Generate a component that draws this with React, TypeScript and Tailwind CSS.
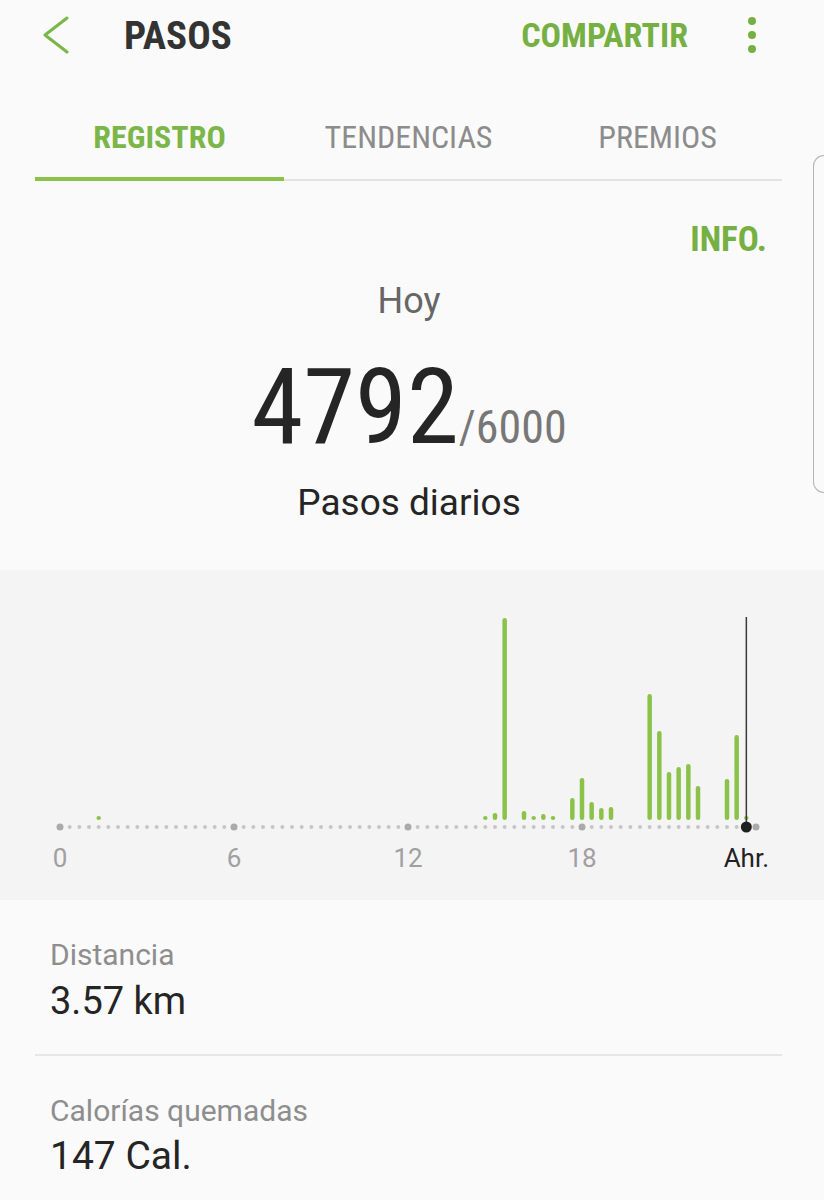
import React from 'react'

const font = "font-['Roboto_Condensed','Roboto',sans-serif]"
const body = "font-['Roboto',sans-serif]"

// bar tops (absolute page y) keyed by 20-minute slot index
const bars: [number, number][] = [
  [4, 816], [44, 816], [45, 813], [46, 618], [48, 811], [49, 816], [50, 814], [51, 816],
  [53, 798], [54, 778], [55, 802], [56, 808], [57, 807],
  [61, 694], [62, 731], [63, 772], [64, 767], [65, 764], [66, 786],
  [69, 779], [70, 735], [71, 816],
]

const slotX = (i: number) => 60 + i * (174 / 18)

const StepsChart = () => {
  const axisY = 257
  const barBottom = 250
  return (
    <svg width="824" height="330" viewBox="0 0 824 330" className="block">
      {bars.map(([i, top]) => {
        const y = top - 570
        const h = Math.max(barBottom - y, 4)
        return (
          <rect key={i} x={slotX(i) - 2.25} y={barBottom - h} width="4.5" height={h} rx="2.25" fill="#8bc34a" />
        )
      })}
      <line x1={slotX(71)} y1="47" x2={slotX(71)} y2={axisY} stroke="#3a3a3a" strokeWidth="1.5" />
      {Array.from({ length: 73 }, (_, i) => {
        const big = i % 18 === 0
        if (i === 71) return <circle key={i} cx={slotX(i)} cy={axisY} r="5.5" fill="#1f1f1f" />
        return <circle key={i} cx={slotX(i)} cy={axisY} r={big ? 3.5 : 2} fill={big ? '#aaaaaa' : '#c6c6c6'} />
      })}
      {[['0', 0], ['6', 18], ['12', 36], ['18', 54]].map(([label, i]) => (
        <text key={label} x={slotX(i as number)} y="297" textAnchor="middle" fontSize="26" fill="#a0a0a0" fontFamily="Roboto, sans-serif">
          {label}
        </text>
      ))}
      <text x={slotX(71)} y="297" textAnchor="middle" fontSize="26" fill="#222222" fontFamily="Roboto, sans-serif">
        Ahr.
      </text>
    </svg>
  )
}

export default function App() {
  return (
    <div className={`${font} relative w-[824px] h-[1200px] overflow-hidden bg-[#fafafa]`}>
      {/* Header */}
      <div className="flex items-start h-[72px]">
        <svg width="26" height="38" viewBox="0 0 26 38" className="mt-[16px] ml-[43px]">
          <polyline points="24,2 2,19 24,36" fill="none" stroke="#7ab648" strokeWidth="3" strokeLinecap="round" strokeLinejoin="round" />
        </svg>
        <div className="ml-[55px] mt-[17px] text-[39px] leading-none font-bold text-[#333333]">PASOS</div>
        <div className="flex-1" />
        <div className="mt-[18px] text-[34px] leading-none font-bold text-[#76b043]">COMPARTIR</div>
        <svg width="10" height="40" viewBox="0 0 10 40" className="mt-[15px] ml-[59px] mr-[67px]">
          <circle cx="5" cy="6" r="4" fill="#76b043" />
          <circle cx="5" cy="20" r="4" fill="#76b043" />
          <circle cx="5" cy="34" r="4" fill="#76b043" />
        </svg>
      </div>

      {/* Tabs */}
      <div className="ml-[35px] mr-[42px]">
        <div className="grid grid-cols-3 h-[105px]">
          <div className="pt-[49px] text-center text-[32px] leading-none font-bold text-[#7ab648]">REGISTRO</div>
          <div className="pt-[49px] text-center text-[32px] leading-none text-[#8c8c8c]">TENDENCIAS</div>
          <div className="pt-[49px] text-center text-[32px] leading-none text-[#8c8c8c]">PREMIOS</div>
        </div>
        <div className="flex items-end h-[4px]">
          <div className="w-[249px] h-[4px] bg-[#8bc34a]" />
          <div className="flex-1 h-[2px] bg-[#e3e3e3]" />
        </div>
      </div>

      {/* Summary */}
      <div className="flex justify-end pr-[57px] mt-[41px]">
        <div className="text-[35px] leading-none font-bold text-[#76b043]">INFO.</div>
      </div>
      <div className={`${body} mt-[26px] pr-[6px] text-center text-[36px] leading-none text-[#666666]`}>Hoy</div>
      <div className="mt-[36px] flex justify-center items-baseline pr-[6px]">
        <span className="text-[105px] leading-none text-[#252525]">4792</span>
        <span className="text-[46px] leading-none text-[#777777]">/6000</span>
      </div>
      <div className={`${body} mt-[24px] pr-[6px] text-center text-[37px] leading-none text-[#252525]`}>Pasos diarios</div>

      {/* Chart */}
      <div className="mt-[49px] h-[330px] bg-[#f4f4f4]">
        <StepsChart />
      </div>

      {/* Details */}
      <div className={`${body} px-[50px] pt-[40px]`}>
        <div className="text-[30px] leading-none text-[#8e8e8e]">Distancia</div>
        <div className="mt-[12px] text-[38px] leading-none text-[#252525]">3.57 km</div>
      </div>
      <div className="ml-[35px] mr-[42px] mt-[34px] h-[2px] bg-[#e6e6e6]" />
      <div className={`${body} px-[50px] pt-[40px]`}>
        <div className="text-[30px] leading-none text-[#8e8e8e]">Calorías quemadas</div>
        <div className="mt-[11px] text-[39px] leading-none text-[#252525]">147 Cal.</div>
      </div>

      {/* Edge panel handle */}
      <div className="absolute right-0 top-[155px] w-[11px] h-[338px] border-[1.5px] border-r-0 border-[#b4b4b4] rounded-l-[12px]" />
    </div>
  )
}
